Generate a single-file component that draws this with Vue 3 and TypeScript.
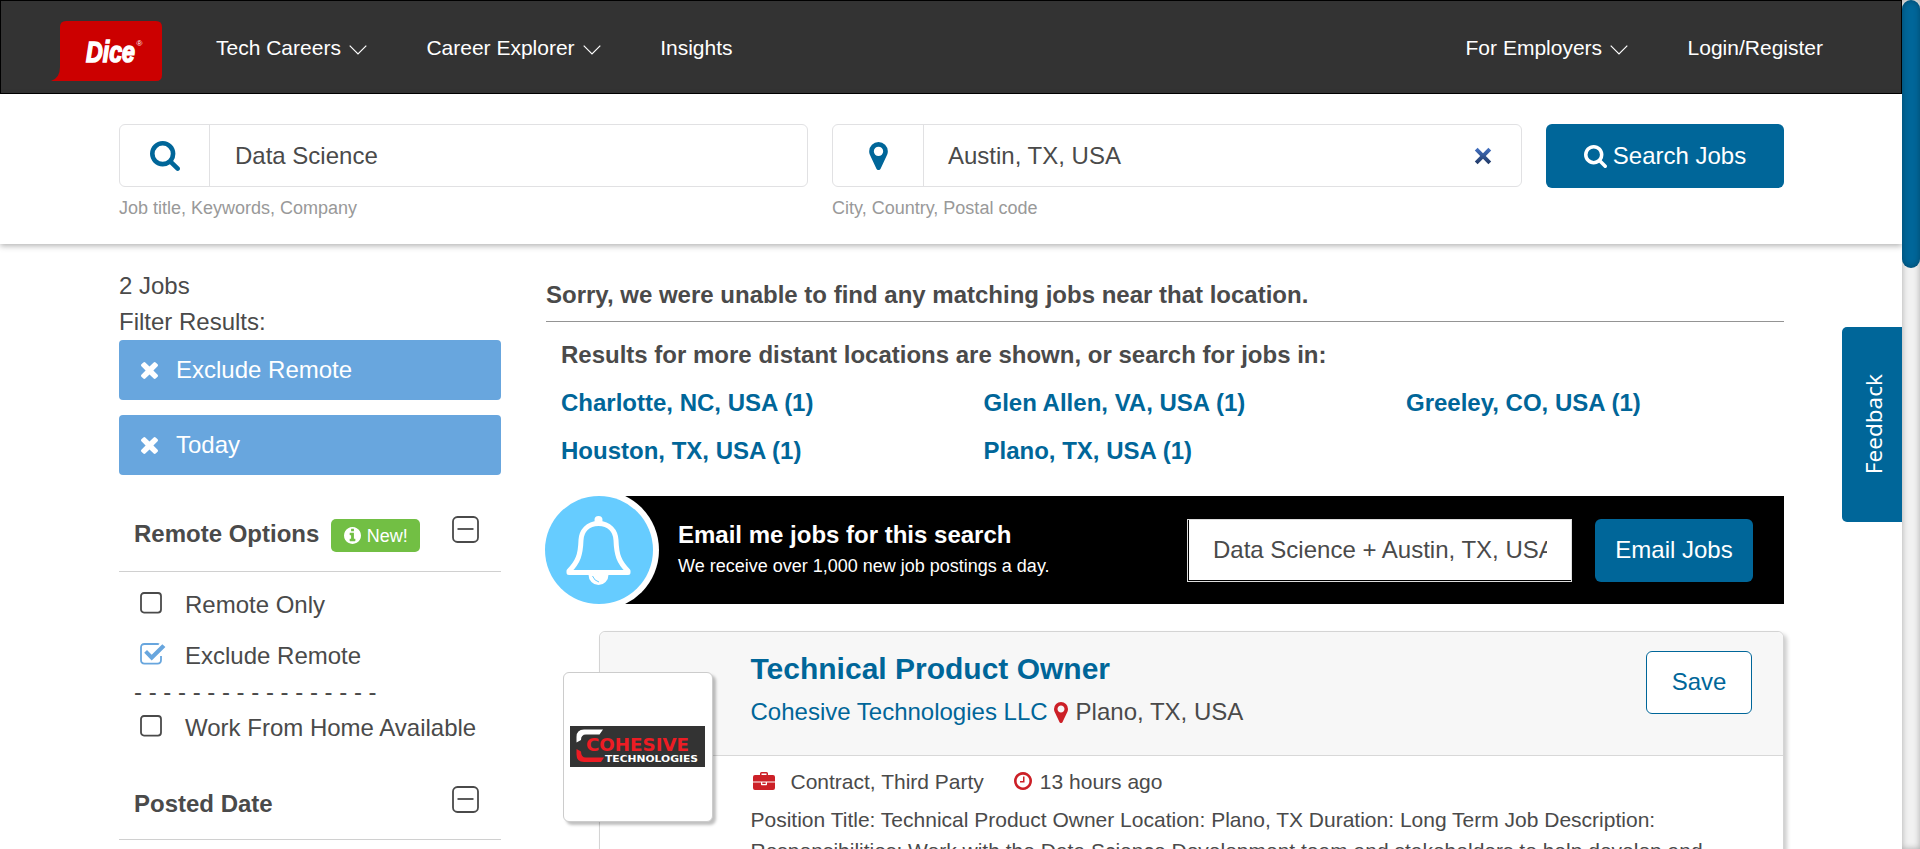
<script setup lang="ts">
interface Pill { label: string }
interface Option { label: string; checked: boolean }

const pills: Pill[] = [{ label: 'Exclude Remote' }, { label: 'Today' }]
const remoteOptions: Option[] = [
  { label: 'Remote Only', checked: false },
  { label: 'Exclude Remote', checked: true },
]
const places: string[] = [
  'Charlotte, NC, USA (1)',
  'Glen Allen, VA, USA (1)',
  'Greeley, CO, USA (1)',
  'Houston, TX, USA (1)',
  'Plano, TX, USA (1)',
]
const divider: string = Array(17).fill('-').join(' ')

const searchPath = 'M1152 704q0-185-131.5-316.5t-316.5-131.5-316.5 131.5-131.5 316.5 131.5 316.5 316.5 131.5 316.5-131.5 131.5-316.5zm512 832q0 52-38 90t-90 38q-54 0-90-38l-343-342q-179 124-399 124-143 0-273.5-55.5t-225-150-150-225-55.5-273.5 55.5-273.5 150-225 225-150 273.5-55.5 273.5 55.5 225 150 150 225 55.5 273.5q0 220-124 399l343 343q37 37 37 90z'
const pinPath = 'M768 512q0-106-75-181t-181-75-181 75-75 181 75 181 181 75 181-75 75-181zm256 0q0 109-33 179l-364 774q-16 33-47.5 52t-67.5 19-67.5-19-46.5-52l-365-774q-33-70-33-179 0-212 150-362t362-150 362 150 150 362z'
const timesPath = 'M1490 1322q0 40-28 68l-136 136q-28 28-68 28t-68-28l-294-294-294 294q-28 28-68 28t-68-28l-136-136q-28-28-28-68t28-68l294-294-294-294q-28-28-28-68t28-68l136-136q28-28 68-28t68 28l294 294 294-294q28-28 68-28t68 28l136 136q28 28 28 68t-28 68l-294 294 294 294q28 28 28 68z'
const infoPath = 'M1152 1376v-160q0-14-9-23t-23-9h-96v-512q0-14-9-23t-23-9h-320q-14 0-23 9t-9 23v160q0 14 9 23t23 9h96v320h-96q-14 0-23 9t-9 23v160q0 14 9 23t23 9h448q14 0 23-9t9-23zm-128-896v-160q0-14-9-23t-23-9h-192q-14 0-23 9t-9 23v160q0 14 9 23t23 9h192q14 0 23-9t9-23zm640 416q0 209-103 385.5t-279.5 279.5-385.5 103-385.5-103-279.5-279.5-103-385.5 103-385.5 279.5-279.5 385.5-103 385.5 103 279.5 279.5 103 385.5z'
const clockPath = 'M1024 544v448q0 14-9 23t-23 9h-320q-14 0-23-9t-9-23v-64q0-14 9-23t23-9h224v-352q0-14 9-23t23-9h64q14 0 23 9t9 23zm416 352q0-148-73-273t-198-198-273-73-273 73-198 198-73 273 73 273 198 198 273 73 273-73 198-198 73-273zm224 0q0 209-103 385.5t-279.5 279.5-385.5 103-385.5-103-279.5-279.5-103-385.5 103-385.5 279.5-279.5 385.5-103 385.5 103 279.5 279.5 103 385.5z'
</script>

<template>
  <div class="viewport">
    <div class="page">
      <header class="topbar">
        <svg class="logo" width="111" height="60" viewBox="0 0 111 60">
          <path d="M9 6Q9 0 15 0H105Q111 0 111 6V54Q111 60 105 60H0Q9 57 9 46Z" fill="#c00" />
          <text class="logo-name" x="35" y="40.500" textLength="49" lengthAdjust="spacingAndGlyphs">Dice</text>
          <text class="logo-mark" x="85.500" y="25">®</text>
        </svg>
        <nav class="nav">
          <a class="nav-link">Tech Careers<svg class="caret" width="18" height="10" viewBox="0 0 18 10"><path d="M.7.7 9 9 17.3.7" /></svg></a>
          <a class="nav-link">Career Explorer<svg class="caret" width="18" height="10" viewBox="0 0 18 10"><path d="M.7.7 9 9 17.3.7" /></svg></a>
          <a class="nav-link">Insights</a>
        </nav>
        <nav class="nav nav-right">
          <a class="nav-link">For Employers<svg class="caret" width="18" height="10" viewBox="0 0 18 10"><path d="M.7.7 9 9 17.3.7" /></svg></a>
          <a class="nav-link">Login/Register</a>
        </nav>
      </header>

      <section class="search">
        <div class="field">
          <div class="box">
            <span class="box-icon"><svg width="30" height="30" viewBox="0 0 1664 1664"><path :d="searchPath" /></svg></span>
            <span class="box-text">Data Science</span>
          </div>
          <div class="hint">Job title, Keywords, Company</div>
        </div>
        <div class="field">
          <div class="box">
            <span class="box-icon place"><svg width="19" height="28" viewBox="0 0 1024 1536"><path :d="pinPath" /></svg></span>
            <span class="box-text">Austin, TX, USA</span>
            <svg class="clear" width="18" height="18" viewBox="0 0 18 18">
              <defs><linearGradient id="clearFill" x1="0" y1="0" x2="0" y2="1"><stop offset="0" stop-color="#4472c4" /><stop offset="1" stop-color="#203864" /></linearGradient></defs>
              <path d="M3.6.8 9 6.2 14.4.8 17.2 3.6 11.8 9l5.4 5.4-2.8 2.8L9 11.8l-5.4 5.4-2.8-2.8L6.2 9 .8 3.6Z" fill="url(#clearFill)" />
            </svg>
          </div>
          <div class="hint">City, Country, Postal code</div>
        </div>
        <button class="btn search-btn"><svg width="23" height="23" viewBox="0 0 1664 1664"><path :d="searchPath" /></svg>Search Jobs</button>
      </section>

      <main class="content">
        <aside class="side">
          <div class="count">2 Jobs</div>
          <div class="count">Filter Results:</div>
          <div class="pills">
            <div v-for="pill in pills" :key="pill.label" class="pill">
              <svg width="17" height="17" viewBox="302 366 1188 1188"><path :d="timesPath" /></svg>{{ pill.label }}
            </div>
          </div>
          <div class="group-head">
            <b>Remote Options</b>
            <span class="badge"><svg width="17" height="17" viewBox="128 128 1536 1536"><path :d="infoPath" /></svg>New!</span>
            <svg class="minus" width="27" height="27" viewBox="0 0 27 27"><rect x="1" y="1" width="25" height="25" rx="4.5" /><path d="M5.5 13h16" /></svg>
          </div>
          <div class="options">
            <div v-for="option in remoteOptions" :key="option.label" class="option">
              <svg class="check" :class="{ on: option.checked }" width="26" height="22" viewBox="0 0 26 22">
                <rect v-if="!option.checked" x="1" y="1" width="20" height="19.6" rx="3" />
                <template v-else>
                  <path d="M19 1.3Q18.6 1 17.5 1H4.5Q1 1 1 4.5v12.6q0 3.5 3.5 3.5h13q3.5 0 3.5-3.5v-4" />
                  <path class="tick" d="M4.2 9.8 7 7l4.7 4.7L22.3 1.2 25.4 4.1 11.7 17.6Z" />
                </template>
              </svg>{{ option.label }}
            </div>
            <div class="dashes">{{ divider }}</div>
            <div class="option">
              <svg class="check" width="26" height="22" viewBox="0 0 26 22"><rect x="1" y="1" width="20" height="19.6" rx="3" /></svg>Work From Home Available
            </div>
          </div>
          <div class="group-head second">
            <b>Posted Date</b>
            <svg class="minus" width="27" height="27" viewBox="0 0 27 27"><rect x="1" y="1" width="25" height="25" rx="4.5" /><path d="M5.5 13h16" /></svg>
          </div>
        </aside>

        <section class="results">
          <h4 class="sorry">Sorry, we were unable to find any matching jobs near that location.</h4>
          <div class="distant">
            <div class="distant-title">Results for more distant locations are shown, or search for jobs in:</div>
            <a v-for="place in places" :key="place">{{ place }}</a>
          </div>

          <div class="alert">
            <svg class="bell" width="116" height="108" viewBox="0 0 116 108">
              <rect width="56" height="108" fill="#fff" />
              <circle cx="54" cy="54" r="60" fill="#fff" />
              <circle cx="54" cy="54" r="54" fill="#6cf" />
              <path d="M53.5 27.5C42.500 27.500 36.500 35 36 44C35.500 59 33 66 24 75V76.500H83V75C74 66 71.500 59 71 44C70.500 35 64.500 27.500 53.500 27.500Z" fill="none" stroke="#fff" stroke-width="5" stroke-linejoin="round" />
              <circle cx="53.5" cy="24" r="4" fill="#fff" />
              <path d="M43.500 78.500A10 10.500 0 0 0 63.500 78.500Z" fill="#fff" />
              <path d="M47.500 80Q49.500 85 54 86" fill="none" stroke="#6cf" stroke-width="1" />
            </svg>
            <div class="alert-copy"><b>Email me jobs for this search</b><span>We receive over 1,000 new job postings a day.</span></div>
            <div class="alert-input"><span>Data Science + Austin, TX, USA</span></div>
            <button class="btn email-btn">Email Jobs</button>
          </div>

          <article class="card">
            <div class="company-logo">
              <svg width="135" height="41" viewBox="0 0 135 41">
                <rect width="135" height="41" fill="#333" />
                <path d="M33 3.5H14Q6.5 3.5 6.5 11V16.5L11 14Q11 8.500 16 8.500H29.500Z" fill="#fff" />
                <path d="M6.5 23 11 25.5Q11 31.500 16 31.500H34L31 36H14Q6.500 36 6.500 28.500Z" fill="#ed1c24" />
                <text class="co-name" x="16" y="25.200" textLength="103" lengthAdjust="spacingAndGlyphs">COHESIVE</text>
                <text class="co-sub" x="35" y="35.700" textLength="93" lengthAdjust="spacingAndGlyphs">TECHNOLOGIES</text>
              </svg>
            </div>
            <div class="card-head">
              <div>
                <h5 class="title">Technical Product Owner</h5>
                <div class="company"><a>Cohesive Technologies LLC</a><svg width="14" height="21" viewBox="0 0 1024 1536"><path :d="pinPath" /></svg>Plano, TX, USA</div>
              </div>
              <button class="save">Save</button>
            </div>
            <div class="card-body">
              <div class="meta">
                <svg class="case" width="22" height="18" viewBox="0 0 22 18"><path d="M7 3V1.500Q7 0 8.500 0h5Q15 0 15 1.500V3h5q2 0 2 2v4.500H0V5q0-2 2-2ZM8.500 3h5V1.500h-5ZM0 10.600h8v1.900q0 .7.700.7h4.600q.7 0 .7-.7v-1.900h8V16q0 2-2 2H2q-2 0-2-2ZM9.300 10.600h3.400V12H9.300Z" fill-rule="evenodd" /></svg>
                <span>Contract, Third Party</span>
                <svg class="clock" width="18" height="18" viewBox="128 128 1536 1536"><path :d="clockPath" /></svg>
                <span>13 hours ago</span>
              </div>
              <p class="desc">Position Title: Technical Product Owner Location: Plano, TX Duration: Long Term Job Description:<br>Responsibilities: Work with the Data Science Development team and stakeholders to help develop and</p>
            </div>
          </article>
        </section>
      </main>
      <div class="feedback"><span>Feedback</span></div>
    </div>
    <div class="scroll"><div class="thumb"></div></div>
  </div>
</template>

<style>
html, body { margin: 0; overflow: hidden; }
</style>

<style scoped>
* { box-sizing: border-box; }
svg { display: block; flex: none; }
button { font: inherit; margin: 0; padding: 0; }
.viewport { display: flex; width: 1920px; height: 849px; overflow: hidden; background: #fff; color: #4a4a4a; font: 24px/36px "Liberation Sans", Arial, sans-serif; white-space: nowrap; }
.page { position: relative; width: 1902px; height: 849px; overflow: hidden; }

.topbar { display: flex; align-items: center; height: 94px; padding: 1px 78px 0 51px; background: #333; border: 1px solid #000; }
.logo { margin: 7px 0 0 -1px; }
.logo-name { font: italic bold 29px "Liberation Sans", Arial, sans-serif; fill: #fff; stroke: #fff; stroke-width: 1.5px; }
.logo-mark { font: 8px "Liberation Sans", Arial, sans-serif; fill: #fff; }
.nav { display: flex; gap: 59.5px; margin-left: 54px; color: #fff; font-size: 21px; }
.nav-right { margin-left: auto; }
.nav-link { display: flex; align-items: center; }
.caret { margin: 4px 0 0 8px; fill: none; stroke: #fff; stroke-width: 1.2; }

.search { position: relative; display: grid; grid-template-columns: 689px 690px 238px; gap: 24px; height: 150px; padding: 30px 0 0 119px; background: #fff; box-shadow: 0 2px 6px rgba(0, 0, 0, .3); }
.box { display: flex; align-items: center; height: 63px; border: 1px solid #e1e1e3; border-radius: 6px; }
.box-icon { display: flex; align-items: center; justify-content: center; width: 90px; height: 61px; border-right: 1px solid #e1e1e3; fill: #069; }
.box-icon.place { width: 91px; }
.box-text { margin-left: 25px; }
.place + .box-text { margin-left: 24px; }
.clear { margin: 1px 29px 0 auto; }
.hint { margin-top: 8px; color: #999; font-size: 18px; line-height: 27px; }
.btn { display: flex; align-items: center; justify-content: center; border: 0; border-radius: 6px; background: #069; color: #fff; fill: #fff; }
.search-btn { gap: 6px; height: 64px; }

.content { display: flex; gap: 45px; padding-left: 119px; }
.side { width: 382px; padding-top: 24px; }
.pills { display: grid; gap: 15px; }
.pill { display: flex; align-items: center; gap: 18px; height: 60px; padding-left: 22px; border-radius: 4px; background: #68a6de; color: #fff; fill: #fff; }
.group-head { display: flex; align-items: flex-start; height: 97px; padding: 41px 22px 0 15px; border-bottom: 1px solid #d0d0d0; }
.group-head.second { height: 87px; padding-top: 33px; }
.badge { display: flex; align-items: center; justify-content: center; gap: 6px; width: 89px; height: 33px; margin: 3px 0 0 12px; border-radius: 5px; background: #72bf44; color: #fff; fill: #fff; font-size: 18px; }
.minus { margin-left: auto; fill: none; stroke: #4a4a4a; stroke-width: 1.8; }
.options { padding-top: 7px; }
.option { display: flex; align-items: center; gap: 19px; height: 51px; padding-left: 21px; }
.check { margin-bottom: 4px; fill: none; stroke: #4a4a4a; stroke-width: 1.8; }
.check.on { stroke: #68a6de; }
.tick { fill: #68a6de; stroke: none; }
.dashes { height: 21px; padding-left: 15px; line-height: 21px; }

.results { width: 1238px; padding-top: 33px; }
.sorry { height: 45px; margin: 0; border-bottom: 1px solid #949494; font-size: 24px; line-height: 36px; }
.distant { display: grid; grid-template-columns: repeat(3, 422.5px); padding: 9px 0 0 15px; font-weight: bold; line-height: 48px; }
.distant-title { grid-column: 1 / -1; }
.distant a { color: #069; }

.alert { display: flex; align-items: center; height: 108px; margin: 21px 0 0 -1px; padding-right: 31px; background: #000; color: #fff; }
.bell { margin-right: 17px; }
.alert-copy { display: flex; flex-direction: column; font-size: 18px; line-height: 27px; padding-bottom: 3px; }
.alert-copy b { font-size: 24px; line-height: 36px; }
.alert-input { width: 385px; height: 63px; margin-left: auto; padding: 12px 24px 0 25px; border: 1px solid #ddd; background: #fff; color: #4a4a4a; box-shadow: inset 1px -1px 0 #000; }
.alert-input span { display: block; overflow: hidden; }
.email-btn { width: 158px; height: 63px; margin-left: 23px; }

.card { position: relative; height: 300px; margin: 27px 0 0 53px; border: 1px solid #d4d4d4; border-radius: 6px; box-shadow: 3px 3px 4px rgba(0, 0, 0, .2); }
.company-logo { position: absolute; top: 40px; left: -37px; width: 150px; height: 150px; padding: 53px 0 0 6px; border: 1px solid #ccc; border-radius: 6px; background: #fff; box-shadow: 3px 3px 3px rgba(0, 0, 0, .25); }
.co-name { font: bold 17px "DejaVu Sans", sans-serif; fill: #ed1c24; }
.co-sub { font: bold 9.5px "DejaVu Sans", sans-serif; fill: #fff; }
.card-head { display: flex; justify-content: space-between; height: 124px; padding: 19px 31px 0 150.5px; border-bottom: 1px solid #d8d8d8; border-radius: 6px 6px 0 0; background: #f7f7f7; }
.title { margin: 0; color: #069; font-size: 30px; line-height: 36px; }
.company { display: flex; align-items: center; margin-top: 7px; }
.company a { color: #069; }
.company svg { margin: 0 8px 0 6px; fill: #cc2027; }
.save { width: 106px; height: 63px; padding-bottom: 1px; border: 1px solid #069; border-radius: 6px; background: #fff; color: #069; }
.card-body { padding: 9px 0 0 150.5px; font-size: 21px; line-height: 31px; }
.meta { display: flex; align-items: center; height: 32px; fill: #cc2027; }
.case { margin: 0 16px 0 2px; }
.clock { margin: 0 8px 0 30px; }
.desc { margin: 7px 0 0; }

.feedback { position: absolute; right: 0; top: 327px; display: flex; align-items: center; justify-content: center; width: 60px; height: 195px; padding-left: 4px; border-radius: 5px 0 0 5px; background: #069; color: #fff; font: 22.500px/30px "Noto Sans", "Open Sans", sans-serif; }
.feedback span { writing-mode: vertical-rl; transform: rotate(180deg); }
.scroll { width: 18px; background: #f1f1f1; box-shadow: inset 0 0 6px rgba(0, 0, 0, .3); }
.thumb { height: 268px; border-radius: 9px; background: #069; box-shadow: inset 0 0 6px rgba(0, 0, 0, .3); }
</style>
